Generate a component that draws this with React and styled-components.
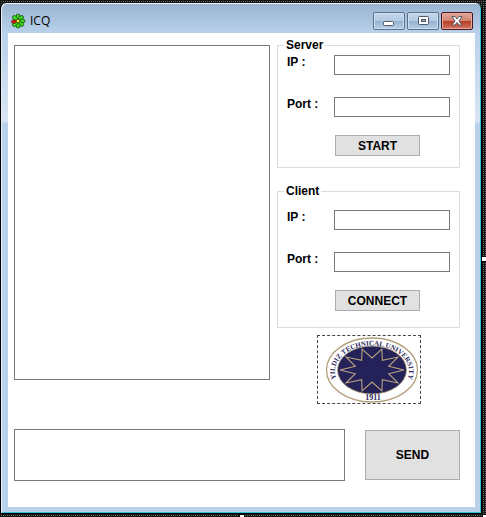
import React from "react";
import styled, { createGlobalStyle } from "styled-components";

const GlobalStyle = createGlobalStyle`
  * { box-sizing: border-box; }
  html, body, #root { height: 100%; }
  body {
    margin: 0;
    font: bold 12px/14px "Liberation Sans", Arial, sans-serif;
    color: #000;
    overflow: hidden;
  }
`;

const Selection = styled.div`
  position: relative;
  height: 100vh;
  padding: 3px 4px 3px 0;
  background:
    repeating-linear-gradient(90deg, #151515 0 1px, transparent 1px 2px),
    repeating-linear-gradient(#151515 0 1px, #666 1px 2px);
`;

const Handle = styled.span`
  position: absolute;
  width: 6px;
  height: 6px;
  background: #fff;
  border: 1px solid #000;
  ${(p) => (p.$side === "right" ? "right: -1px; top: 50%; margin-top: -3px;" : "")}
  ${(p) => (p.$side === "bottom" ? "bottom: -3px; left: 50%; margin-left: -4px;" : "")}
  ${(p) => (p.$side === "corner" ? "bottom: -3px; right: -2px;" : "")}
`;

const Window = styled.main`
  display: flex;
  flex-direction: column;
  height: 100%;
  padding: 0 6px 6px 7px;
  border: solid #000;
  border-width: 0 1px 1px 1px;
  border-radius: 6px 6px 0 0;
  background: linear-gradient(#99b4d1, #b9d1ea 30px, #d9e5f3 118px, #b9d1ea 121px);
  box-shadow: inset 1px 1px #e8f2fa, inset -1px -1px #35bfd6;
`;

const TitleBar = styled.header`
  display: flex;
  flex: none;
  align-items: center;
  height: 30px;
  padding: 6px 2px 0;
`;

const Title = styled.h1`
  flex: 1;
  margin: 0 0 0 4px;
  font: 12px/16px "Open Sans", sans-serif;
`;

const Controls = styled.div`
  display: flex;
  gap: 2px;
`;

const ControlButton = styled.button`
  display: grid;
  place-items: center;
  width: 32px;
  height: 18px;
  padding: 0;
  border: 1px solid ${(p) => (p.$close ? "#4b1420" : "#5b708d")};
  border-radius: 2px;
  background: ${(p) =>
    p.$close
      ? "linear-gradient(#e3a899, #d28272 48%, #b83b20 50%, #cf7562)"
      : "linear-gradient(#c5d7eb, #b2cae3 48%, #94b1d0 50%, #b5cfe7)"};
  box-shadow: inset 0 0 0 1px ${(p) => (p.$close ? "#e5aa9f" : "#cbdff1")};
`;

const Form = styled.form`
  display: flex;
  flex: 1;
  flex-direction: column;
  justify-content: space-between;
  min-height: 0;
  padding: 6px 15px 26px 6px;
  background: #fff;
`;

const Columns = styled.div`
  display: flex;
  gap: 7px;
`;

const TextArea = styled.textarea`
  display: block;
  flex: 1;
  min-width: 0;
  height: ${(p) => p.$height};
  margin: ${(p) => p.$margin || "0"};
  padding: 4px;
  border: 1px solid #7a7a7a;
  background: #fff;
  font: inherit;
  resize: none;
  outline: none;
`;

const Side = styled.div`
  display: flex;
  flex: none;
  flex-direction: column;
  width: 183px;
`;

const Group = styled.fieldset`
  display: flex;
  flex-direction: column;
  min-width: 0;
  margin: 0 0 ${(p) => (p.$roomy ? "7px" : "17px")};
  padding: ${(p) => (p.$roomy ? "12px 9px 16px" : "3px 9px 11px")};
  border: 1px solid #dcdcdc;
`;

const Legend = styled.legend`
  margin-left: -3px;
  padding: 0 2px;
  line-height: 13px;
`;

const Field = styled.label`
  display: flex;
  justify-content: space-between;
  height: 20px;
  margin-bottom: ${(p) => (p.$last ? "18px" : "22px")};
`;

const Input = styled.input`
  width: 116px;
  height: 20px;
  padding: 2px;
  border: 1px solid #7a7a7a;
  background: #fff;
  font: inherit;
  outline: none;
`;

const PushButton = styled.button`
  width: ${(p) => (p.$large ? "95px" : "85px")};
  height: ${(p) => (p.$large ? "50px" : "21px")};
  margin-left: ${(p) => (p.$large ? "20px" : "48px")};
  padding: 0;
  border: 1px solid #adadad;
  background: #e1e1e1;
  color: #000;
  font: inherit;
`;

const LogoBox = styled.div`
  align-self: center;
  width: 104px;
  height: 69px;
  border: 1px dashed #444;
`;

const Composer = styled.div`
  display: flex;
  align-items: center;
`;

const Drawing = styled.svg`
  display: block;
`;

function Flower() {
  return (
    <Drawing width="16" height="16" viewBox="0 0 16 16" aria-hidden="true">
      {[0, 45, 90, 135, 180, 225, 315].map((a) => (
        <ellipse key={a} cx="8" cy="3.8" rx="2" ry="2.9" fill="#3fdc22" stroke="#0b3a06" strokeWidth=".7" transform={`rotate(${a} 8 8)`} />
      ))}
      <ellipse cx="4" cy="8.6" rx="2.6" ry="1.7" fill="#ed1b16" stroke="#35100a" strokeWidth=".7" />
      <circle cx="8" cy="8" r="1.8" fill="#ffe53b" stroke="#3b3600" strokeWidth=".6" />
    </Drawing>
  );
}

const star = Array.from({ length: 20 }, (_, i) => {
  const a = (i * Math.PI) / 10;
  const r = i % 2 ? 0.55 : 1;
  return `${46 + 32 * r * Math.cos(a)},${33 + 22 * r * Math.sin(a)}`;
}).join(" ");

function Emblem() {
  return (
    <Drawing width="102" height="67" viewBox="-8 -1 102 67" role="img" aria-label="Yildiz Technical University, 1911">
      <defs>
        <path id="ring" d="M12.7 45.8 A37 26 0 1 1 79.3 45.8" />
      </defs>
      <ellipse cx="46" cy="33" rx="45.5" ry="32" fill="#fff" stroke="#b3a07a" strokeWidth="1.3" />
      <ellipse cx="46" cy="33" rx="34.5" ry="24" fill="#252159" stroke="#b3a07a" strokeWidth=".8" />
      <polygon points={star} fill="none" stroke="#b8a57e" strokeWidth="1.1" />
      <text fontFamily="Liberation Serif, serif" fontWeight="bold" fontSize="7" fill="#29265c">
        <textPath href="#ring" startOffset="50%" textAnchor="middle">YILDIZ TECHNICAL UNIVERSITY</textPath>
      </text>
      <text x="47" y="63" textAnchor="middle" fontFamily="Liberation Serif, serif" fontWeight="bold" fontSize="8" fill="#29265c">1911</text>
    </Drawing>
  );
}

function Connection({ title, action, roomy }) {
  return (
    <Group $roomy={roomy}>
      <Legend>{title}</Legend>
      <Field>IP :<Input type="text" /></Field>
      <Field $last>Port :<Input type="text" /></Field>
      <PushButton type="button">{action}</PushButton>
    </Group>
  );
}

export default function App() {
  return (
    <Selection>
      <GlobalStyle />
      <Window>
        <TitleBar>
          <Flower />
          <Title>ICQ</Title>
          <Controls>
            <ControlButton type="button" aria-label="Minimize">
              <Drawing width="14" height="12"><rect x="1.5" y="6.5" width="10" height="4" rx="1" fill="#fff" stroke="#535666" /></Drawing>
            </ControlButton>
            <ControlButton type="button" aria-label="Maximize">
              <Drawing width="12" height="12">
                <rect x="1.5" y="1.5" width="10" height="8" rx="1" fill="#fff" stroke="#535666" />
                <rect x="4.5" y="4.5" width="4" height="2" fill="#8facc9" stroke="#535666" />
              </Drawing>
            </ControlButton>
            <ControlButton type="button" aria-label="Close" $close>
              <Drawing width="12" height="12">
                <path d="M1 1.5h3L6 4l2-2.5h3L8 6l3 4H8L6 7.5 4 10H1l3-4z" fill="#fff" stroke="#535666" strokeLinejoin="round" />
              </Drawing>
            </ControlButton>
          </Controls>
        </TitleBar>
        <Form>
          <Columns>
            <TextArea aria-label="Conversation" readOnly $height="335px" $margin="6px 0 0" />
            <Side>
              <Connection title="Server" action="START" />
              <Connection title="Client" action="CONNECT" roomy />
              <LogoBox><Emblem /></LogoBox>
            </Side>
          </Columns>
          <Composer>
            <TextArea aria-label="Message" $height="52px" />
            <PushButton type="button" $large>SEND</PushButton>
          </Composer>
        </Form>
      </Window>
      <Handle $side="right" />
      <Handle $side="bottom" />
      <Handle $side="corner" />
    </Selection>
  );
}
